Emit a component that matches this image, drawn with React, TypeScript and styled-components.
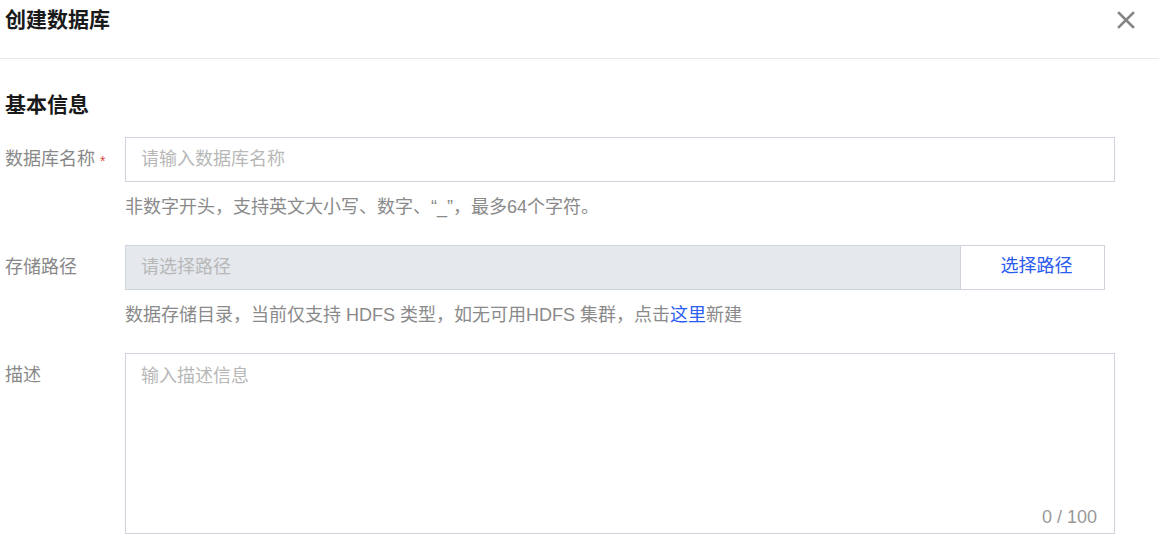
import React from "react";
import styled, { createGlobalStyle } from "styled-components";

const GlobalStyle = createGlobalStyle`
  html, body { margin: 0; padding: 0; background: #fff; }
  body {
    font-family: "Liberation Sans", "Noto Sans CJK SC", sans-serif;
    color: #1f1f1f;
  }
  * { box-sizing: border-box; }
`;

const Dialog = styled.div`
  width: 1159px;
  height: 560px;
  overflow: hidden;
  background: #fff;
`;

const Header = styled.div`
  height: 59px;
  padding: 5px 24px 0 5px;
  display: flex;
  align-items: flex-start;
  justify-content: space-between;
  border-bottom: 1px solid #e8e8e8;
`;

const Title = styled.h1`
  margin: 0;
  font-size: 21px;
  line-height: 30px;
  font-weight: 700;
  color: #1a1a1a;
`;

const CloseButton = styled.button`
  border: none;
  background: none;
  padding: 0;
  margin-top: 6px;
  width: 18px;
  height: 18px;
  display: flex;
  cursor: pointer;
`;

const Body = styled.div`
  padding: 31px 44px 0 5px;
`;

const SectionTitle = styled.h2`
  margin: 0 0 17px;
  font-size: 21px;
  line-height: 30px;
  font-weight: 700;
  color: #1a1a1a;
`;

const Field = styled.div<{ $gap?: number }>`
  display: grid;
  grid-template-columns: 120px 1fr;
  margin-bottom: ${(p) => p.$gap ?? 0}px;
`;

const Label = styled.label`
  font-size: 18px;
  line-height: 45px;
  color: #888;
  display: flex;
  align-items: flex-start;
  gap: 5px;
`;

const Required = styled.span`
  color: #e54545;
  font-size: 14px;
  line-height: 45px;
  margin-top: 2px;
`;

const Control = styled.div`
  display: flex;
  flex-direction: column;
`;

const TextInput = styled.input<{ $disabled?: boolean }>`
  height: 45px;
  width: 100%;
  border: 1px solid #cfd4dc;
  background: ${(p) => (p.$disabled ? "#e5e8ed" : "#fff")};
  padding: 0 16px 0 15px;
  font-family: inherit;
  font-size: 18px;
  color: #333;
  outline: none;
  border-radius: 0;
  &::placeholder { color: #b8b8b8; }
`;

const PathGroup = styled.div`
  display: flex;
  width: 980px;
`;

const PathButton = styled.button`
  flex: 0 0 144px;
  height: 45px;
  border: 1px solid #cfd4dc;
  border-left: none;
  background: #fff;
  color: #2a5cf0;
  font-family: inherit;
  font-size: 18px;
  line-height: 26px;
  cursor: pointer;
  padding: 0 0 3px 8px;
`;

const Hint = styled.div`
  margin-top: 12px;
  font-size: 18px;
  line-height: 26px;
  color: #8a8a8a;
`;

const Link = styled.a`
  color: #2a5cf0;
  text-decoration: none;
`;

const TextAreaWrap = styled.div`
  position: relative;
  height: 181px;
`;

const TextArea = styled.textarea`
  width: 100%;
  height: 100%;
  border: 1px solid #cfd4dc;
  padding: 9px 15px;
  font-family: inherit;
  font-size: 18px;
  line-height: 26px;
  color: #333;
  resize: none;
  outline: none;
  border-radius: 0;
  &::placeholder { color: #b8b8b8; }
`;

const Counter = styled.span`
  position: absolute;
  right: 18px;
  bottom: 4px;
  font-size: 18px;
  line-height: 26px;
  color: #999;
`;

export default function App() {
  return (
    <>
      <GlobalStyle />
      <Dialog>
        <Header>
          <Title>创建数据库</Title>
          <CloseButton aria-label="关闭">
            <svg width="18" height="18" viewBox="0 0 18 18">
              <path d="M2 2 L16 16 M16 2 L2 16" stroke="#858585" strokeWidth="2.6" strokeLinecap="square" />
            </svg>
          </CloseButton>
        </Header>
        <Body>
          <SectionTitle>基本信息</SectionTitle>
          <Field $gap={25}>
            <Label>
              数据库名称<Required>*</Required>
            </Label>
            <Control>
              <TextInput placeholder="请输入数据库名称" />
              <Hint>非数字开头，支持英文大小写、数字、“_”，最多64个字符。</Hint>
            </Control>
          </Field>
          <Field $gap={25}>
            <Label>存储路径</Label>
            <Control>
              <PathGroup>
                <TextInput $disabled placeholder="请选择路径" readOnly />
                <PathButton>选择路径</PathButton>
              </PathGroup>
              <Hint>
                数据存储目录，当前仅支持 HDFS 类型，如无可用HDFS 集群，点击<Link href="#">这里</Link>新建
              </Hint>
            </Control>
          </Field>
          <Field>
            <Label>描述</Label>
            <TextAreaWrap>
              <TextArea placeholder="输入描述信息" />
              <Counter>0 / 100</Counter>
            </TextAreaWrap>
          </Field>
        </Body>
      </Dialog>
    </>
  );
}
